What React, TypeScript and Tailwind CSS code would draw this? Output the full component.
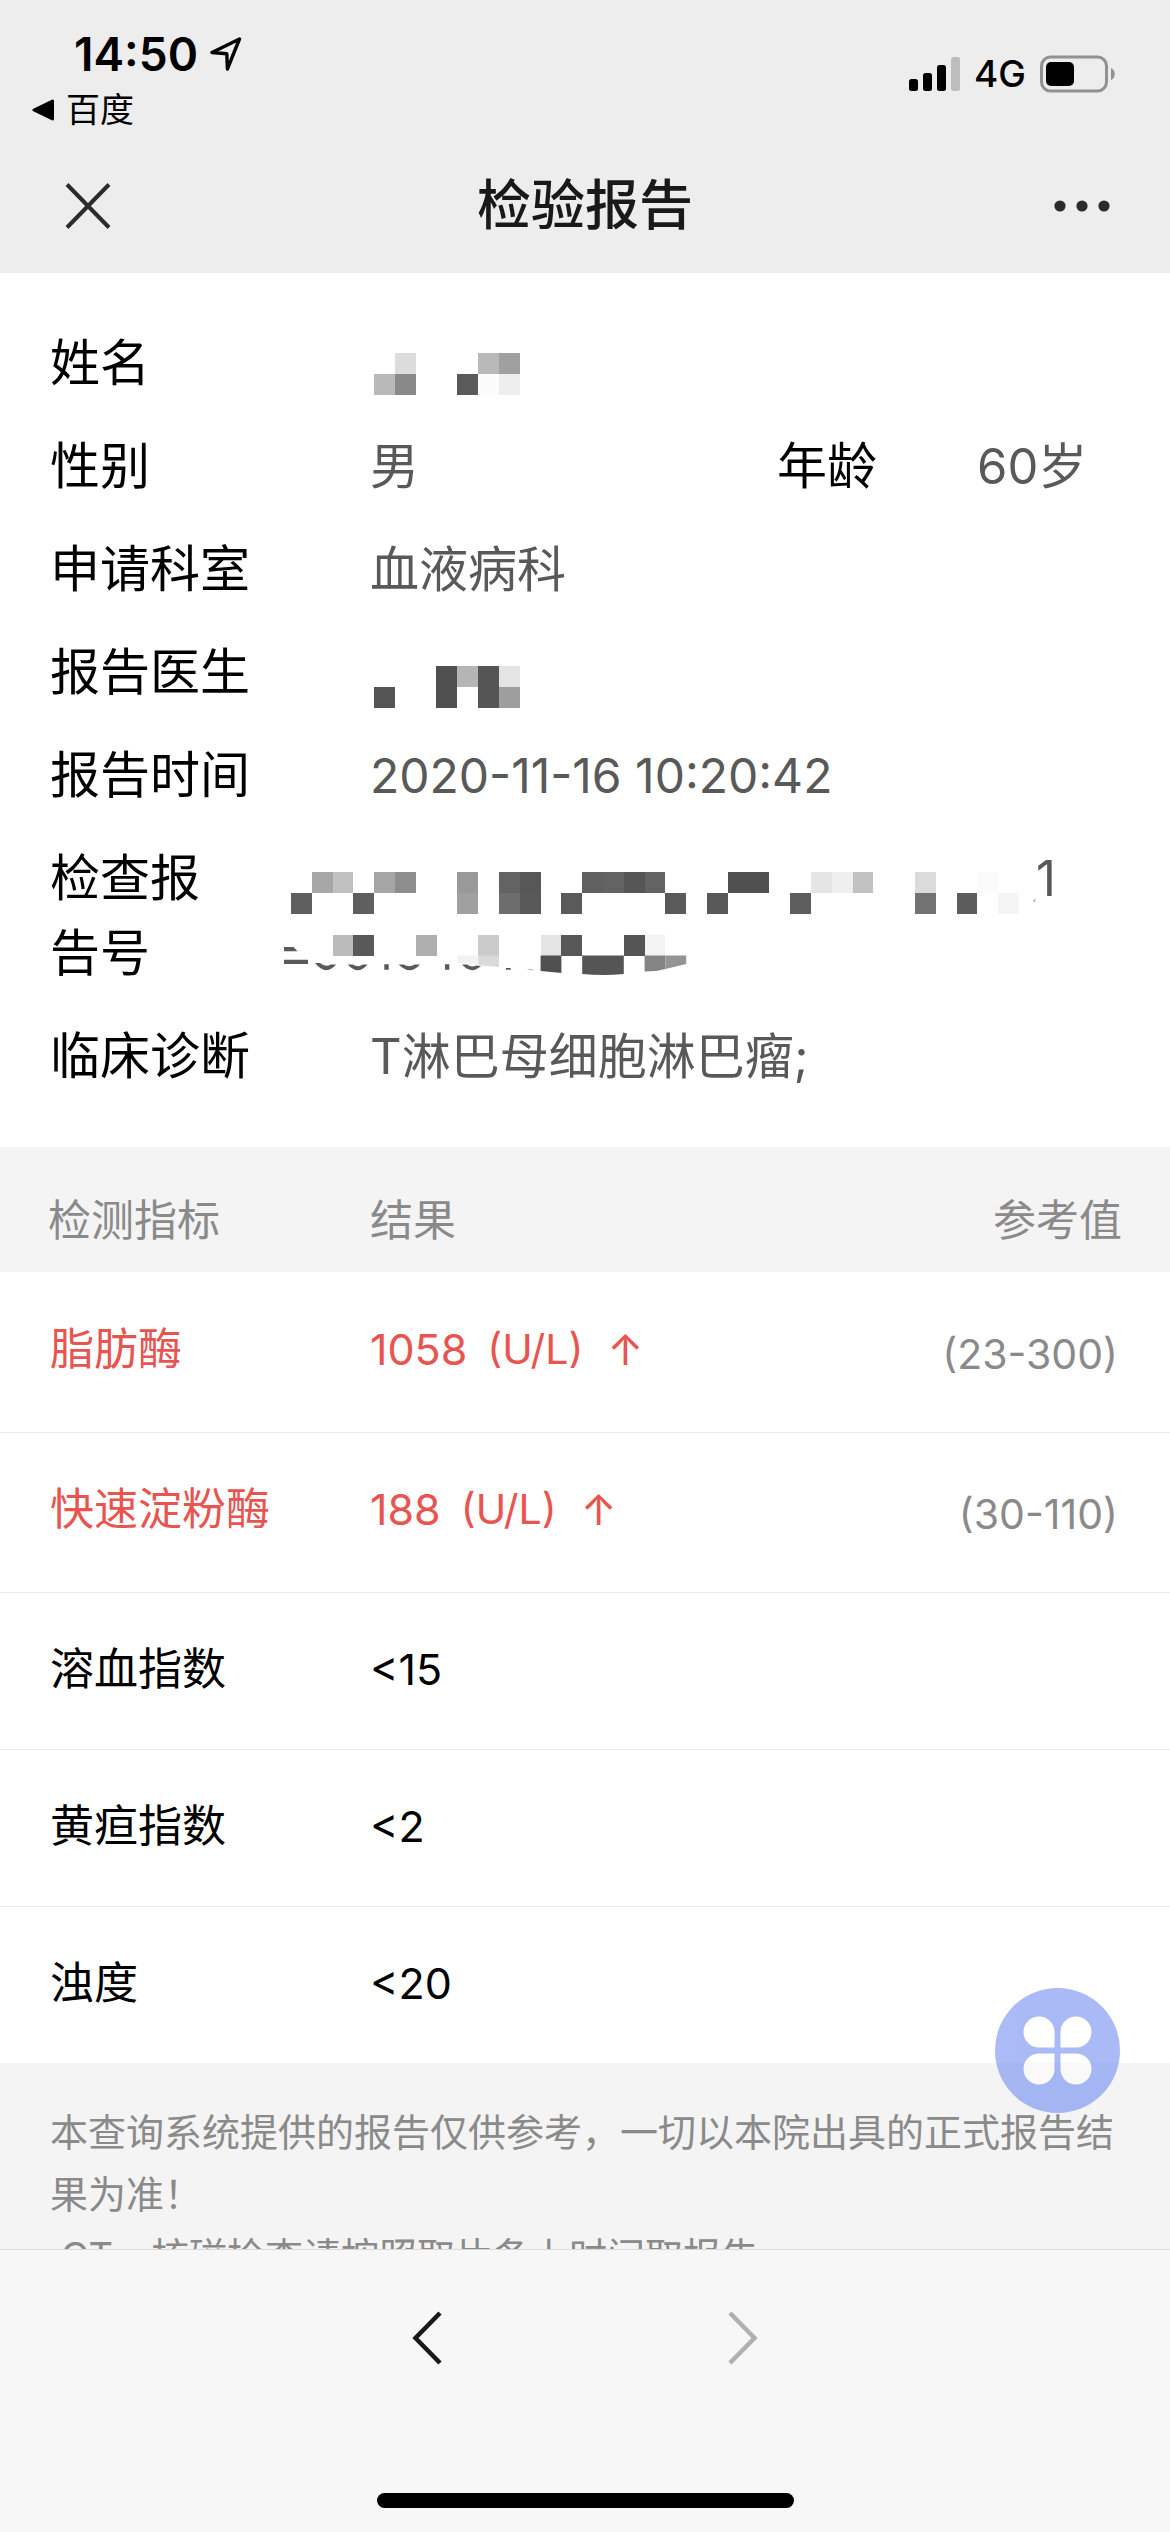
type Cell = [col: number, row: number, color: string];

const CELL = 20.8;

const nameCells: Cell[] = [
  [1, 0, '#dcdcdc'], [5, 0, '#b9b9b9'], [6, 0, '#a0a0a0'],
  [0, 1, '#b9b9b9'], [1, 1, '#898989'], [4, 1, '#5a5a5a'], [5, 1, '#fbfbfb'], [6, 1, '#eeeeee'],
];

const doctorCells: Cell[] = [
  [3, 0, '#505050'], [4, 0, '#b5b5b5'], [5, 0, '#555555'], [6, 0, '#e4e4e4'],
  [0, 1, '#545454'], [3, 1, '#505050'], [5, 1, '#555555'], [6, 1, '#9e9e9e'],
];

const numberCells: Cell[] = [
  [1, 0, '#a7a7a7'], [2, 0, '#c0c0c0'], [4, 0, '#a5a5a5'], [5, 0, '#8d8d8d'], [8, 0, '#999999'],
  [10, 0, '#636363'], [11, 0, '#575757'], [14, 0, '#606060'], [15, 0, '#636363'], [16, 0, '#565656'],
  [17, 0, '#636363'], [21, 0, '#505050'], [22, 0, '#505050'], [25, 0, '#e5e5e5'], [26, 0, '#efefef'],
  [27, 0, '#c2c2c2'], [30, 0, '#dbdbdb'], [33, 0, '#fbfbfb'],
  [0, 1, '#5f5f5f'], [3, 1, '#5f5f5f'], [8, 1, '#a0a0a0'], [10, 1, '#6d6d6d'], [11, 1, '#595959'],
  [13, 1, '#5a5a5a'], [18, 1, '#5a5a5a'], [20, 1, '#595959'], [24, 1, '#5e5e5e'], [30, 1, '#727272'],
  [32, 1, '#5c5c5c'], [34, 1, '#f5f5f5'],
  [2, 3, '#bbbbbb'], [3, 3, '#595959'], [6, 3, '#afafaf'], [9, 3, '#cbcbcb'], [12, 3, '#e4e4e4'],
  [13, 3, '#575757'], [16, 3, '#555555'], [17, 3, '#f3f3f3'],
];

const results = [
  { name: '脂肪酶', value: '1058', unit: '(U/L)', range: '(23-300)', high: true },
  { name: '快速淀粉酶', value: '188', unit: '(U/L)', range: '(30-110)', high: true },
  { name: '溶血指数', value: '<15' },
  { name: '黄疸指数', value: '<2' },
  { name: '浊度', value: '<20' },
];

export default function App() {
  return (
    <div className="flex h-screen flex-col bg-white font-[Inter,'Noto_Sans_CJK_SC',sans-serif] text-black">
      <header className="shrink-0 bg-[#ededed] pb-1">
        <StatusBar />
        <div className="flex h-[126px] items-center justify-between px-[60px] text-[#2b2b2b]">
          <button type="button" aria-label="关闭" className="flex h-14 w-14 items-center justify-center">
            <svg className="h-[46px] w-[46px]" viewBox="0 0 46 46" fill="none" stroke="currentColor" strokeWidth="4">
              <path d="M2 1.5l42 43M44 1.5l-42 43" />
            </svg>
          </button>
          <h1 className="text-[54px] font-medium leading-[64px] text-[#191919]">检验报告</h1>
          <button type="button" aria-label="更多" className="flex h-14 w-14 items-center justify-center">
            <svg className="h-3 w-14" viewBox="0 0 56 12" fill="currentColor">
              <circle cx="6" cy="6" r="5.6" />
              <circle cx="28" cy="6" r="5.6" />
              <circle cx="50" cy="6" r="5.6" />
            </svg>
          </button>
        </div>
      </header>

      <div className="relative min-h-0 flex-1">
        <main className="h-full overflow-hidden">
          <PatientInfo />
          <ResultTable />
          <div className="min-h-full bg-[#f4f4f4] px-[50px] pt-[38px] text-[38px] leading-[62px] text-[#8a8a8a]">
            <p>本查询系统提供的报告仅供参考，一切以本院出具的正式报告结果为准！</p>
            <p className="whitespace-pre-wrap"> CT、核磁检查请按照取片条上时间取报告</p>
          </div>
        </main>
        <button
          type="button"
          aria-label="快捷菜单"
          className="absolute right-[50px] bottom-[136px] h-[125px] w-[125px] rounded-full bg-[#5577f1] opacity-50"
        >
          <svg viewBox="0 0 125 125" fill="#fff">
            <path d="M59.5 59.5H43.5A15.5 15.5 0 1 1 59.5 43.5z" />
            <path d="M65.5 59.5H81.5A15.5 15.5 0 1 0 65.5 43.5z" />
            <path d="M59.5 65.5H43.5A15.5 15.5 0 1 0 59.5 81.5z" />
            <path d="M65.5 65.5H81.5A15.5 15.5 0 1 1 65.5 81.5z" />
          </svg>
        </button>
      </div>

      <footer className="flex shrink-0 flex-col items-center border-t border-[#d9d9d9] bg-[#f7f7f7] pt-[60px] pb-6">
        <nav className="flex gap-[260px]">
          <button type="button" aria-label="后退" className="flex h-14 w-14 items-center justify-center text-[#191919]">
            <svg className="h-14 w-8" viewBox="0 0 32 56" fill="none" stroke="currentColor" strokeWidth="4.5">
              <path d="M29 3L4.500 28 29 53" />
            </svg>
          </button>
          <button type="button" aria-label="前进" disabled className="flex h-14 w-14 items-center justify-center text-[#b0b0b0]">
            <svg className="h-14 w-8" viewBox="0 0 32 56" fill="none" stroke="currentColor" strokeWidth="4.5">
              <path d="M3 3l24.500 25L3 53" />
            </svg>
          </button>
        </nav>
        <div className="mt-[127px] h-[15px] w-[417px] rounded-full bg-black" />
      </footer>
    </div>
  );
}

function StatusBar() {
  return (
    <div className="flex h-[143px] items-start justify-between pt-[30px] pr-[54px] pl-8">
      <div>
        <div className="flex items-center gap-3 pl-[42px]">
          <span className="text-[46px] font-semibold leading-[48px]">14:50</span>
          <svg className="h-9 w-8" viewBox="0 0 32 36" fill="none" stroke="#000" strokeWidth="3.400" strokeLinejoin="round">
            <path d="M29.500 3L2 16.500l14.800 1.200.6 15.300z" />
          </svg>
        </div>
        <a href="#" className="mt-3 flex items-center gap-3 text-[34px] leading-10">
          <svg className="h-[22px] w-[22px]" viewBox="0 0 22 22">
            <path d="M2 11L20.500 2v18z" stroke="#000" strokeWidth="3" strokeLinejoin="round" />
          </svg>
          百度
        </a>
      </div>
      <div className="mt-6 flex items-center gap-3.5">
        <svg className="h-9 w-[51px]" viewBox="0 0 51 36">
          <rect x="0" y="23" width="9" height="12" rx="2.500" />
          <rect x="14" y="17" width="9" height="18" rx="2.500" />
          <rect x="28" y="9" width="9" height="26" rx="2.500" />
          <rect x="42" y="1" width="9" height="34" rx="2.500" fill="#bdbdbd" />
        </svg>
        <span className="text-[37px] font-medium leading-10">4G</span>
        <svg className="h-[38px] w-[76px]" viewBox="0 0 76 38">
          <rect x="1.500" y="2" width="65" height="34" rx="9" fill="none" stroke="#919191" strokeWidth="3" />
          <rect x="6" y="7" width="28" height="24" rx="5" />
          <path d="M71 13c5 2 5 10 0 12z" fill="#919191" />
        </svg>
      </div>
    </div>
  );
}

function PatientInfo() {
  return (
    <dl className="px-[50px] py-[39px] text-[49px] leading-[75px] text-[#595959]">
      <div className="flex py-3.5">
        <Label>姓名</Label>
        <dd><Mosaic cells={nameCells} top={27} /></dd>
      </div>
      <div className="flex py-3.5">
        <Label>性别</Label>
        <dd className="flex-1">男</dd>
        <dt className="w-[200px] shrink-0 text-[50px] text-black">年龄</dt>
        <dd className="w-[143px] shrink-0">60岁</dd>
      </div>
      <div className="flex py-3.5">
        <Label>申请科室</Label>
        <dd>血液病科</dd>
      </div>
      <div className="flex py-3.5">
        <Label>报告医生</Label>
        <dd><Mosaic cells={doctorCells} top={31} /></dd>
      </div>
      <div className="flex py-3.5">
        <Label>报告时间</Label>
        <dd className="text-[48px]">2020-11-16 10:20:42</dd>
      </div>
      <div className="flex py-3.5">
        <dt className="w-[234px] shrink-0 pr-10 text-[50px] text-black">检查报告号</dt>
        <dd className="flex items-start"><NumberMosaic />1</dd>
      </div>
      <div className="flex py-3.5">
        <Label>临床诊断</Label>
        <dd>T淋巴母细胞淋巴瘤;</dd>
      </div>
    </dl>
  );
}

function Label({ children }: { children: React.ReactNode }) {
  return <dt className="w-80 shrink-0 text-[50px] text-black">{children}</dt>;
}

function ResultTable() {
  return (
    <table className="w-full border-collapse text-left text-[43px] leading-[60px]">
      <thead className="bg-[#f4f4f4] text-[#8a8a8a]">
        <tr className="h-[125px]">
          <th className="w-[370px] pt-5 pl-12 font-normal">检测指标</th>
          <th className="pt-5 font-normal">结果</th>
          <th className="pt-5 pr-12 text-right font-normal">参考值</th>
        </tr>
      </thead>
      <tbody>
        {results.map((r) =>
          r.high ? (
            <tr key={r.name} className="h-40 border-b border-[#ebebeb] text-[#e8544f]">
              <td className="pb-1.5 pl-[50px] text-[44px]">{r.name}</td>
              <td className="pb-1.5">
                <span className="flex">
                  <span>{r.value}</span>
                  <span className="ml-5 text-[41px]">{r.unit}</span>
                  <span className="ml-6">↑</span>
                </span>
              </td>
              <td className="pt-1 pr-[52px] text-right text-[41px] text-[#8a8a8a]">{r.range}</td>
            </tr>
          ) : (
            <tr key={r.name} className="h-[157px] border-b border-[#ebebeb] last:border-b-0">
              <td className="pb-1 pl-[50px] text-[44px]">{r.name}</td>
              <td className="pb-1">{r.value}</td>
              <td />
            </tr>
          )
        )}
      </tbody>
    </table>
  );
}

function Cells({ cells, x, y }: { cells: Cell[]; x: number; y: number }) {
  return (
    <g shapeRendering="crispEdges">
      {cells.map(([col, row, color]) => (
        <rect key={`${col}-${row}`} x={x + col * CELL} y={y + row * CELL} width={CELL} height={CELL} fill={color} />
      ))}
    </g>
  );
}

function Mosaic({ cells, top }: { cells: Cell[]; top: number }) {
  return (
    <svg className="h-[75px] w-[150px]" viewBox="0 0 150 75" aria-hidden="true">
      <Cells cells={cells} x={4} y={top} />
    </svg>
  );
}

function NumberMosaic() {
  return (
    <svg className="h-[150px] w-[752px]" viewBox="0 0 752 150" aria-hidden="true">
      <Cells cells={numberCells} x={7} y={31.3} />
      {/* smeared lower edge */}
      <path d="M173.400 114.500h20.800v9l-20.800-2z" fill="#f2f2f2" />
      <path d="M194.200 114.500H215v11.500l-20.800-2z" fill="#dadada" />
      <path d="M256.600 114.500h20.800V132l-20.800-2z" fill="#505050" />
      <path d="M298.200 114.500h41.600v18.500q-20 2-41.600 0z" fill="#555" />
      <path d="M360.600 114.500h20.800v13.500l-9 2-11.800.5z" fill="#848484" />
      <path d="M381.400 114.500h20.800v8.500l-20.800 5z" fill="#949494" />
      <g fill="#5a5a5a">
        <path d="M0 106h9.500l4 4.300H0z" />
        <path d="M0 118.700h24v4.300H0zM100.300 123.300h4.400v5.400h-4.400zM161 123.300h4.300v5.400H161zM222 127h4.700v1.700H222z" />
        <path d="M31 122h5q5.500 4.500 11 1.500h5q-10 12-21-1.500zM63.700 123.500h5q5.500 3.500 10 0h4.800q-9.500 11.500-19.800 0zM114.700 123.500h5q5.500 3.500 11 0h5.300q-10 11.500-21.300 0zM178 123.500h5q5 3.500 9 1l5 .5q-9.500 9-19-1.500z" />
        <path d="M243 127.600l9 1.600-6-.2zM749 60l2.500-2.500-.5 3.500z" fill="#999" />
      </g>
    </svg>
  );
}
